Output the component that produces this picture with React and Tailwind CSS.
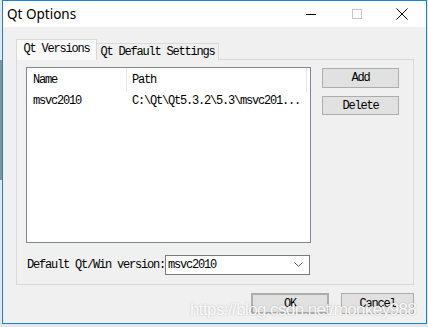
import React from 'react';

const mono = { fontFamily: '"Liberation Mono", "DejaVu Sans Mono", monospace' };

function Btn({ children, className = '' }) {
  return (
    <div
      className={`flex items-center justify-center bg-[#e1e1e1] border border-[#adadad] text-[12px] tracking-[-1.2px] text-black ${className}`}
      style={mono}
    >
      {children}
    </div>
  );
}

export default function App() {
  return (
    <div className="w-[428px] h-[327px] bg-[#e3e7ec] overflow-hidden relative">
      <div className="absolute left-0 top-[60px] w-[2px] h-[120px] bg-[#8a9099]" />
      <div className="ml-[2px] w-[425px] h-[324px] border border-[#1883d7] flex flex-col bg-[#f0f0f0]">
        {/* title bar */}
        <div className="h-[26px] bg-white flex items-center shrink-0">
          <span
            className="pl-[4px] text-[13.5px] text-black"
            style={{ fontFamily: '"Noto Sans", sans-serif' }}
          >
            Qt Options
          </span>
          <div className="ml-auto flex items-center h-full">
            <div className="w-[46px] flex justify-center">
              <div className="w-[10px] h-px bg-black" />
            </div>
            <div className="w-[46px] flex justify-center">
              <div className="w-[10px] h-[10px] border border-[#c8c8c8]" />
            </div>
            <div className="w-[46px] flex justify-center pr-[2px]">
              <svg width="12" height="12" viewBox="0 0 12 12">
                <path d="M0.5 0.5L11.5 11.5M11.5 0.5L0.5 11.5" stroke="#000" strokeWidth="1" />
              </svg>
            </div>
          </div>
        </div>

        {/* content */}
        <div className="flex-1 flex flex-col pl-[13px] pr-[11px] pt-[12px]">
          {/* tabs */}
          <div className="flex items-end h-[21px] relative z-10 -mb-px">
            <div
              className="w-[81px] h-[21px] bg-[#f9f9f9] border border-b-0 border-[#d9d9d9] flex items-center justify-center pb-[2px] text-[12px] tracking-[-1.2px] text-black"
              style={mono}
            >
              Qt Versions
            </div>
            <div
              className="w-[122px] h-[17px] bg-[#f0f0f0] border border-l-0 border-b-0 border-[#d9d9d9] flex items-center justify-center text-[12px] tracking-[-1.2px] text-black"
              style={mono}
            >
              Qt Default Settings
            </div>
          </div>

          {/* pane */}
          <div className="w-[398px] h-[226px] border border-[#d9d9d9] flex flex-col pl-[9px] pt-[7px]">
            <div className="flex">
              {/* list */}
              <div className="w-[285px] h-[176px] bg-white border border-[#828790] text-[12px] tracking-[-1.2px] text-black" style={mono}>
                <div className="flex h-[24px] items-center">
                  <div className="w-[100px] h-full flex items-center pl-[6px] border-r border-[#e5e5e5]">Name</div>
                  <div className="w-[180px] h-full flex items-center pl-[5px] border-r border-[#e5e5e5]">Path</div>
                </div>
                <div className="flex h-[18px] items-center">
                  <div className="w-[100px] pl-[6px]">msvc2010</div>
                  <div className="w-[180px] pl-[5px] whitespace-nowrap">C:\Qt\Qt5.3.2\5.3\msvc201...</div>
                </div>
              </div>
              {/* buttons */}
              <div className="ml-[11px] flex flex-col pt-px gap-[8px]">
                <Btn className="w-[77px] h-[20px]">Add</Btn>
                <Btn className="w-[77px] h-[19px]">Delete</Btn>
              </div>
            </div>

            <div className="flex items-center mt-[12px]">
              <span className="text-[12px] tracking-[-1.2px] text-black pl-[1px] w-[139px] whitespace-nowrap" style={mono}>
                Default Qt/Win version:
              </span>
              <div className="w-[145px] h-[20px] bg-white border border-[#7a7a7a] flex items-center pl-[2px] pr-[6px]">
                <span className="text-[12px] tracking-[-1.2px] text-black" style={mono}>msvc2010</span>
                <svg className="ml-auto" width="9" height="6" viewBox="0 0 9 6">
                  <path d="M0.5 0.5L4.5 4.5L8.5 0.5" fill="none" stroke="#606060" strokeWidth="1" />
                </svg>
              </div>
            </div>
          </div>

          {/* dialog buttons */}
          <div className="flex justify-end mt-[8px] gap-[12px] pr-px">
            <Btn className="w-[78px] h-[21px] border-2 border-[#0078d7]">OK</Btn>
            <Btn className="w-[73px] h-[21px]">Cancel</Btn>
          </div>
        </div>
      </div>

      {/* watermark */}
      <div
        className="absolute left-[190px] top-[297px] text-[17px] text-white/90 whitespace-nowrap tracking-[-0.6px]"
        style={{ fontFamily: '"Liberation Sans", Arial, sans-serif', textShadow: '0 0 2px rgba(0,0,0,0.25)' }}
      >
        https://blog.csdn.net/monkey988
      </div>
    </div>
  );
}
